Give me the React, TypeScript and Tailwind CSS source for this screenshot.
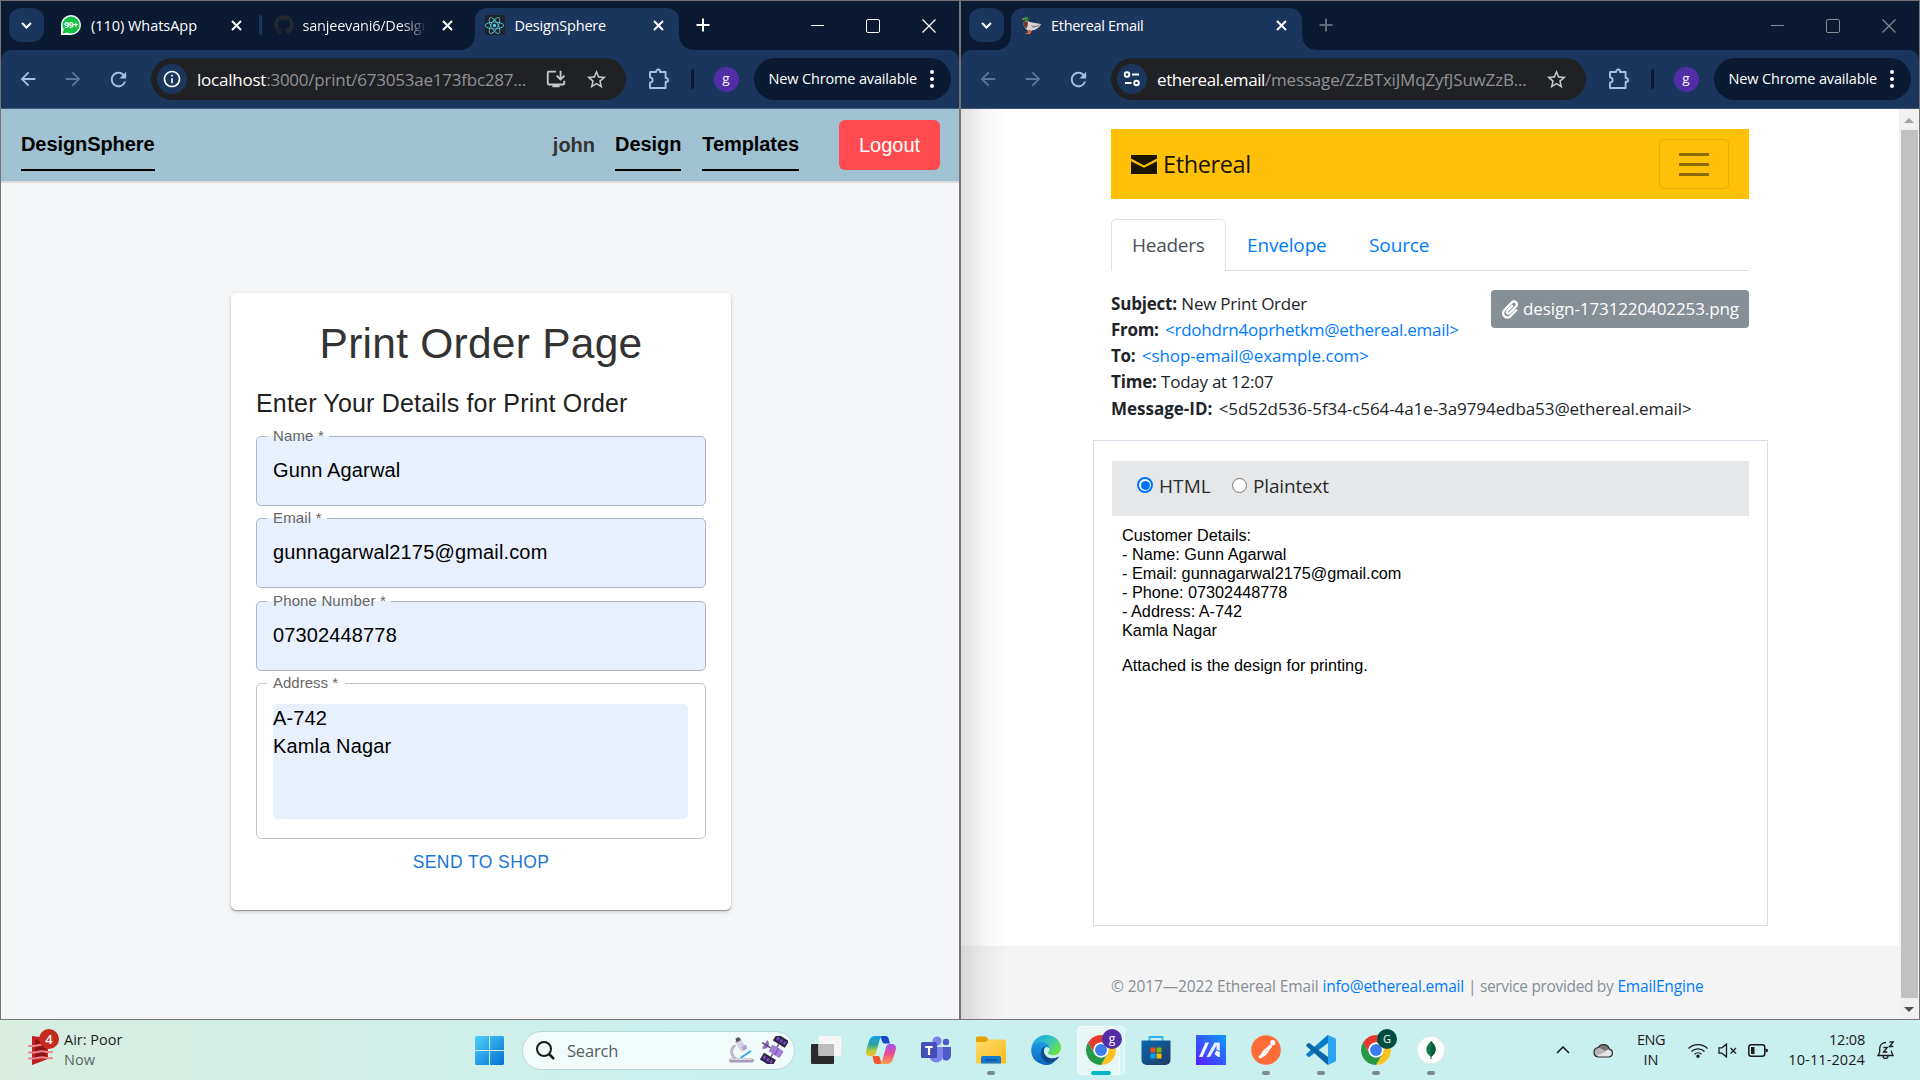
import React from "react";
import { FaGithub, FaReact, FaPaperclip } from "react-icons/fa";
import {
  MdArrowBack,
  MdArrowForward,
  MdRefresh,
  MdStarBorder,
  MdInstallDesktop,
  MdInfoOutline,
} from "react-icons/md";

type Kids = { children?: React.ReactNode };

/* ---------- small drawings ---------- */

const Cross = () => (
  <svg className="size-[11px] shrink-0" viewBox="0 0 11 11">
    <path d="M1 1l9 9M10 1l-9 9" stroke="#fff" strokeWidth="2" />
  </svg>
);

const Puzzle = () => (
  <svg className="size-[22px] shrink-0" viewBox="0 0 22 22" fill="none">
    <path
      d="M2 4h6.200V3.400a1.900 1.900 0 0 1 3.800 0V4h5.600v6h.6a1.900 1.900 0 0 1 0 3.800h-.6V20H2v-5.200c3.600-.6 3.600-5 0-5.600z"
      stroke="#a8c0e4"
      strokeWidth="1.900"
      strokeLinejoin="round"
    />
  </svg>
);

const Tune = () => (
  <svg className="size-[18px]" viewBox="0 0 18 18" fill="none" stroke="#fff" strokeWidth="1.900">
    <circle cx="4" cy="4.500" r="2.300" />
    <path d="M9 4.500h7M2 13h6.500" />
    <circle cx="13.500" cy="13" r="2.300" />
  </svg>
);

const WhatsApp = () => (
  <svg className="size-5 shrink-0" viewBox="0 0 20 20">
    <path d="M0 20V9.800A10 10 0 1 1 10 20z" fill="#fff" />
    <circle cx="10" cy="10" r="8.600" fill="#12c143" />
    <path d="M1.500 18.500l1.300-4.500 3.400 3.400z" fill="#12c143" />
    <text x="10.200" y="13.200" textAnchor="middle" fontSize="8.500" fontWeight="700" fill="#fff" fontFamily="Open Sans, sans-serif" textLength="14">
      99+
    </text>
  </svg>
);

const Duck = () => (
  <svg className="size-5 shrink-0" viewBox="0 0 20 20">
    <path d="M7 15l1 3M10 15l-1 3" stroke="#e0662f" strokeWidth="1.800" />
    <path d="M4.500 18.500h5" stroke="#e0662f" strokeWidth="1.200" />
    <path d="M2.500 7c3-1.500 5-1 6.500 0 3 1 7 1 11 2-1.500 3.500-5 6.500-10 6.500S2 12 2.500 7z" fill="#d9d3d6" />
    <path d="M2.500 6.500h4.200c.5 3-.2 6-1.700 7C2.600 12 2 9 2.500 6.500z" fill="#6b3a2c" />
    <path d="M10 10c3 1.500 6 1 9-1-1.500 3-4.500 4-7.500 3.300z" fill="#8a7f86" />
    <path d="M3.300 3a2.200 2.200 0 0 1 4.200.5c0 1.200-.6 2-1 2.800H3.800z" fill="#2b8c3c" />
    <path d="M3.500 3L0 4.200l3.500.6z" fill="#d9b23c" />
  </svg>
);

const Envelope = () => (
  <svg className="h-[19px] w-[26px]" viewBox="0 0 26 19" fill="#1a1400">
    <path d="M0 0h26v3.600L13 10.400 0 3.600z" />
    <path d="M0 6.200l13 6.600 13-6.600V19H0z" />
  </svg>
);

const Chrome = () => (
  <svg className="size-[30px]" viewBox="0 0 48 48">
    <path d="M24 12h20.780A24 24 0 0 0 3.220 12l10.380 18A12 12 0 0 1 24 12z" fill="#e33b2e" />
    <path d="M24 12h20.780A24 24 0 0 1 24 48l10.390-18A12 12 0 0 0 24 12z" fill="#fcc31e" />
    <path d="M34.390 30L24 48A24 24 0 0 1 3.220 12l10.390 18a12 12 0 0 0 20.780 0z" fill="#279847" />
    <circle cx="24" cy="24" r="12" fill="#fff" />
    <circle cx="24" cy="24" r="9.500" fill="#3b7ded" />
  </svg>
);

const Edge = () => (
  <svg className="size-[30px]" viewBox="0 0 30 30">
    <defs>
      <linearGradient id="eTop" x1="0" y1="0" x2="1" y2=".6">
        <stop offset="0" stopColor="#1c9be0" />
        <stop offset=".5" stopColor="#2fc0cf" />
        <stop offset="1" stopColor="#6be04f" />
      </linearGradient>
      <linearGradient id="eMid" x1="0" y1="0" x2="0" y2="1">
        <stop offset="0" stopColor="#1b9ae0" />
        <stop offset="1" stopColor="#0b66c2" />
      </linearGradient>
    </defs>
    <path d="M.3 13A15 15 0 0 1 15 0c8.500 0 15 6 15 12.500 0 5-3.500 7.800-7.800 7.800-3.500 0-5.200-1.200-5.200-2.300 0-1 1.700-1.500 1.500-4C18 8 7 4.500.3 13z" fill="url(#eTop)" />
    <path d="M.2 14C2 9 6 7 10 7c4.500 0 8.500 3 8.500 6.500-2-2.700-7-1-7 4.500 0 7 7 11 12.500 9A15 15 0 0 1 .2 14z" fill="url(#eMid)" />
    <path d="M14.500 11.500c-6 1-6.500 11-.5 15 4 2.600 9 2.200 13.500-3.700.5-.7 0-1.200-.7-.8-5 2.600-11.800 1.200-13.600-4-.8-2.600 0-5 1.300-6.500z" fill="#124a92" />
  </svg>
);

const Copilot = () => (
  <svg className="h-[28px] w-[30px]" viewBox="0 0 30 28">
    <defs>
      <linearGradient id="cL" x1="0" y1="0" x2="0" y2="1">
        <stop offset="0" stopColor="#1b9de8" />
        <stop offset=".45" stopColor="#2aa79b" />
        <stop offset=".75" stopColor="#b9cf3a" />
        <stop offset="1" stopColor="#f7b731" />
      </linearGradient>
      <linearGradient id="cR" x1="0" y1="0" x2="0" y2="1">
        <stop offset="0" stopColor="#a34df0" />
        <stop offset=".5" stopColor="#ec4f8d" />
        <stop offset="1" stopColor="#fca24a" />
      </linearGradient>
    </defs>
    <path d="M13 0h6.500c1.800 0 2.700 1.200 3.200 3l1.300 4.500h-5c-2.500 0-3-2-3.500-4S14.500 0 13 0z" fill="#1547c9" />
    <path d="M17 28h-6.500c-1.800 0-2.500-1.200-3-3L6.500 20h5c2.500 0 2.500 2 3 4s1 4 2.500 4z" fill="#f0562c" />
    <path d="M9 0h7.500c-2 1-2.600 3-3.300 5.500l-3 10.500c-.7 2.500-1.700 4-4.200 4H4c-3.500 0-4.500-3-3.700-6L3.200 4.500C4 1.800 6 0 9 0z" fill="url(#cL)" />
    <path d="M21 28h-7.500c2-1 2.600-3 3.300-5.500l3-10.500c.7-2.500 1.700-4 4.200-4h2c3.500 0 4.500 3 3.700 6l-2.900 9.500C26 26.200 24 28 21 28z" fill="url(#cR)" />
  </svg>
);

const Teams = () => (
  <svg className="h-[28px] w-[30px]" viewBox="0 0 30 28">
    <circle cx="25" cy="6" r="3.200" fill="#5059c9" />
    <path d="M20 11h10v8.500a5 5 0 0 1-8 4z" fill="#5059c9" />
    <circle cx="16" cy="5" r="4.600" fill="#7b83eb" />
    <path d="M8.500 11H22v9.500a6.800 6.800 0 0 1-13.500 0z" fill="#7b83eb" />
    <rect y="6" width="16" height="16" rx="1.500" fill="#464eb8" />
    <path d="M4.300 10h7.400v2H9.100v7H6.900v-7H4.300z" fill="#fff" />
  </svg>
);

const Folder = () => (
  <svg className="h-[28px] w-[30px]" viewBox="0 0 30 28">
    <defs>
      <linearGradient id="fo" x1="0" y1="0" x2="1" y2="1">
        <stop offset="0" stopColor="#ffdc6b" />
        <stop offset="1" stopColor="#fbb91a" />
      </linearGradient>
    </defs>
    <path d="M0 2A1.500 1.500 0 0 1 1.500.5H10l3 3.500H29V10H0z" fill="#e3a008" />
    <path d="M0 6h9l4-2.500h15.500A1.500 1.500 0 0 1 30 5v22.500H0z" fill="url(#fo)" />
    <path d="M5 27.500V22a2 2 0 0 1 2-2h16a2 2 0 0 1 2 2v5.500z" fill="#1179cf" />
    <path d="M9 24h12" stroke="#0b4f93" strokeWidth="1.500" />
  </svg>
);

const Store = () => (
  <svg className="size-[30px]" viewBox="0 0 30 30">
    <defs>
      <linearGradient id="st" x1="0" y1="0" x2="1" y2="1">
        <stop offset="0" stopColor="#0669ad" />
        <stop offset="1" stopColor="#243a63" />
      </linearGradient>
    </defs>
    <path d="M8.500 7V2h13v5" fill="none" stroke="#2fb3ee" strokeWidth="1.800" />
    <path d="M.5 5.500h29V25a5 5 0 0 1-5 5h-19a5 5 0 0 1-5-5z" fill="url(#st)" />
    <path d="M9.500 12.500h5v5h-5z" fill="#f25022" />
    <path d="M15.500 12.500h5v5h-5z" fill="#7fba00" />
    <path d="M9.500 18.500h5v5h-5z" fill="#00a4ef" />
    <path d="M15.500 18.500h5v5h-5z" fill="#ffb900" />
  </svg>
);

const Asus = () => (
  <svg className="size-[30px]" viewBox="0 0 30 30">
    <defs>
      <linearGradient id="as" x1="0" y1="1" x2="1" y2="0">
        <stop offset="0" stopColor="#5a1bff" />
        <stop offset="1" stopColor="#0a9bff" />
      </linearGradient>
    </defs>
    <path d="M0 0h30v30H0z" fill="url(#as)" />
    <path d="M9.500 7.500H13L6.500 22H3z" fill="#f4f4ff" />
    <path d="M18.500 7.500h5.300V16l-3.300-1.500v-4L14 22h-3.500z" fill="#e9ebff" />
    <path d="M20.500 15.500l3.300 1.500v5h-1.500l-3.800-3z" fill="#fff" />
  </svg>
);

const Postman = () => (
  <svg className="size-[30px]" viewBox="0 0 30 30">
    <circle cx="15" cy="15" r="14.800" fill="#ff6c37" />
    <circle cx="21.700" cy="7.700" r="2.600" fill="#fff" />
    <path d="M19.500 10.500L12 17M20 11.500l-5.500 7.500-5 3.500M14 16l-5.500 6M12 17l3.500.5" stroke="#fff" strokeWidth="1.900" fill="none" strokeLinecap="round" />
  </svg>
);

const VSCode = () => (
  <svg className="size-[30px]" viewBox="0 0 30 30">
    <path d="M22 0l-1.500 1L2 17.500l-1.500 1.300c-.5.500-.5 1 0 1.500l1.600 1.400c.4.400 1 .4 1.500 0L22 8z" fill="#0a7bc9" />
    <path d="M22 30l-1.500-1L2 12.500.5 11.200c-.5-.5-.5-1 0-1.500l1.600-1.400c.4-.4 1-.4 1.500 0L22 22z" fill="#0b65a9" />
    <path d="M22 0l7 3.300c.6.300 1 .8 1 1.500v20.400c0 .7-.4 1.200-1 1.500L22 30c-.8 0-1.200-.3-1.600-.8.900.9 1.600.3 1.600-.7v-27c0-1-.8-1.600-1.600-.7C20.800.3 21.300 0 22 0z" fill="#2aa5f2" />
  </svg>
);

const Mongo = () => (
  <svg className="size-[30px]" viewBox="0 0 30 30">
    <circle cx="15" cy="15" r="13.800" fill="#fbfcfb" stroke="#dfe8e6" />
    <path d="M15 6c3 3 5 5.500 4.600 9.300-.4 2.900-2.200 4.700-4 6.200h-1.200c-1.800-1.500-3.700-3.300-4-6.200C10 11.500 12.500 9 15 6z" fill="#0f7a4a" />
    <path d="M15 6c3 3 5 5.500 4.600 9.300-.4 2.900-2.200 4.700-4 6.200H15z" fill="#0a5b3c" />
    <path d="M15 20v4" stroke="#0a5b3c" />
  </svg>
);

const TaskView = () => (
  <svg className="h-[28px] w-[30px]" viewBox="0 0 30 28">
    <rect y="8" width="23" height="20" rx="1" fill="#2b2b2b" />
    <rect x="7.500" width="22.500" height="20" rx="1" fill="#f6f6f6" />
    <path d="M7.500 8H23v12H8.500a1 1 0 0 1-1-1z" fill="#bdbdbd" />
  </svg>
);

const Windows = () => (
  <svg className="size-[29px]" viewBox="0 0 29 29">
    <defs>
      <linearGradient id="wi" gradientUnits="userSpaceOnUse" x1="0" y1="0" x2="29" y2="29">
        <stop offset="0" stopColor="#4fd0fc" />
        <stop offset="1" stopColor="#0070d2" />
      </linearGradient>
    </defs>
    <path fill="url(#wi)" d="M1.500 0H14v14H0V1.500A1.500 1.500 0 0 1 1.500 0zM15 0h12.500A1.500 1.500 0 0 1 29 1.500V14H15zM0 15h14v14H1.500A1.500 1.500 0 0 1 0 27.500zM15 15h14v12.500a1.500 1.500 0 0 1-1.500 1.500H15z" />
  </svg>
);

const Microscope = () => (
  <svg className="h-[26px] w-[25px]" viewBox="0 0 25 26">
    <path d="M7.500 22C1.500 19 1 11 6.500 8.500" fill="none" stroke="#c2b8ce" strokeWidth="3" />
    <path d="M5.500 4.500l6-3 6.500 10-5.500 3.500z" fill="#d6cfe0" />
    <path d="M6.500 1.500l3.500-1.500 2 3-4.500 2.500z" fill="#57505f" />
    <path d="M12.500 10l4.500-2.500 1.500 4-4 2.500z" fill="#b3a3d4" />
    <path d="M11.500 21l10.500-7" stroke="#35a4ea" strokeWidth="2" />
    <rect y="21.500" width="25" height="4" rx="2" fill="#a79bb8" />
    <rect x="1" y="21.500" width="22" height="1.500" rx=".7" fill="#dcd5e5" />
  </svg>
);

const Satellite = () => (
  <svg className="size-[28px]" viewBox="0 0 28 28">
    <g transform="rotate(32 14 14)">
      <rect x="8" y="-1.500" width="14" height="8" rx=".5" fill="#2c2440" />
      <path d="M10 2.500h2.800M14 2.500h2.800M18 2.500h2.500" stroke="#6f45c0" strokeWidth="3.500" />
      <rect x="7" y="21.500" width="14" height="8" rx=".5" fill="#2c2440" />
      <path d="M8.500 25.500h2.800M12.500 25.500h2.800M16.500 25.500H19" stroke="#6f45c0" strokeWidth="3.500" />
      <path d="M15 6.500v15" stroke="#6b5a86" strokeWidth="1.500" />
      <rect x="10" y="10" width="13" height="8" rx="1" fill="#a57fd6" />
      <path d="M17 10v8" stroke="#7f5cb8" strokeWidth="1.500" />
      <path d="M3 9c5 1 6 9 0 10z" fill="#8d6cc0" />
      <path d="M0 14h10" stroke="#5e4a7c" strokeWidth="1.600" />
    </g>
  </svg>
);

const AirQuality = () => (
  <svg className="h-[30px] w-[26px]" viewBox="0 0 26 30">
    <path d="M4 1l16 2v21L4 30z" fill="#c0201f" />
    <path d="M7 5l11 1v15L7 25z" fill="#8f1216" />
    <g fill="none" stroke="#f0808a" strokeWidth="2" strokeLinecap="round">
      <path d="M1 11h5c4 0 6-2 10-1 3 .7 5 1 8 .5" />
      <path d="M1 17.500h5c4 0 6-2 10-1 3 .7 5 1 8 .5" />
      <path d="M1 23.500h5c4 0 6-2 10-1 3 .7 5 1 8 .5" />
    </g>
  </svg>
);

/* ---------- browser chrome ---------- */

function Tab({ className, active, children }: Kids & { className: string; active?: boolean }) {
  return (
    <div
      className={
        "relative mt-auto flex h-[42px] items-center pb-[8px] text-[14.5px] text-white " +
        (active ? "rounded-t-[12px] bg-[#1b365d] " : "") +
        className
      }
    >
      {active && (
        <>
          <span className="absolute bottom-0 -left-[14px] size-[14px] bg-[radial-gradient(circle_at_0_0,transparent_13.5px,#1b365d_14px)]" />
          <span className="absolute -right-[14px] bottom-0 size-[14px] bg-[radial-gradient(circle_at_100%_0,transparent_13.5px,#1b365d_14px)]" />
        </>
      )}
      {children}
    </div>
  );
}

function TabStrip({ dim, children }: Kids & { dim?: boolean }) {
  return (
    <div className="flex h-[49px] shrink-0 items-start bg-[#0a1a32]">
      <div className="mt-[7px] mr-[7px] ml-2 flex h-[34px] w-[35px] shrink-0 items-center justify-center rounded-[12px] bg-[#1b365d]">
        <svg className="h-[7px] w-[11px]" viewBox="0 0 11 7">
          <path d="M1 1l4.500 4.500L10 1" fill="none" stroke="#fff" strokeWidth="2" />
        </svg>
      </div>
      {children}
      <svg className={"mt-[17px] ml-[17px] size-[14px] " + (dim ? "opacity-35" : "")} viewBox="0 0 14 14">
        <path d="M7 .5v13M.5 7h13" stroke="#fff" strokeWidth="2" />
      </svg>
      <div className={"mr-[2px] ml-auto flex h-[49px] items-center " + (dim ? "opacity-50" : "")}>
        <div className="flex w-14 justify-center">
          <div className="h-px w-[13px] bg-white" />
        </div>
        <div className="flex w-14 justify-center">
          <div className="size-[14px] rounded-[2px] border border-white" />
        </div>
        <div className="flex w-14 justify-center">
          <svg className="size-[14px]" viewBox="0 0 14 14">
            <path d="M.5.5l13 13M13.500.5l-13 13" stroke="#fff" strokeWidth="1.200" />
          </svg>
        </div>
      </div>
    </div>
  );
}

function Toolbar({ canGoBack, site, install, children }: Kids & { canGoBack?: boolean; site: React.ReactNode; install?: boolean }) {
  return (
    <div className="bg-[#0a1a32]">
      <div className="flex h-[59px] items-center rounded-t-[10px] border-b border-[#3f5779] bg-[#1b365d] pl-[16px] text-[#a8c0e4]">
        <MdArrowBack className={"size-[22px] " + (canGoBack ? "" : "opacity-45")} />
        <MdArrowForward className="ml-[23px] size-[22px] opacity-45" />
        <MdRefresh className="ml-[23px] size-[23px]" />
        <div className="ml-[21px] flex h-[42px] w-[475px] items-center rounded-full bg-[#202124] pl-[6px] text-[17px] text-[#8f9296]">
          <div className="mr-[10px] flex size-[30px] shrink-0 items-center justify-center rounded-full bg-[#1b365d] text-white">{site}</div>
          <div className="pt-px whitespace-nowrap">{children}</div>
          <div className="mr-[18px] ml-auto flex gap-[18px] text-[#c6c9cc]">
            {install && <MdInstallDesktop className="size-[22px]" />}
            <MdStarBorder className="size-[23px]" />
          </div>
        </div>
        <div className="ml-[22px]">
          <Puzzle />
        </div>
        <div className="ml-[21px] h-5 w-[2.500px] rounded bg-[#0a1a32]" />
        <div className="ml-[20px] flex size-[25px] items-center justify-center rounded-full bg-[#522da8] pb-[2px] text-[13.5px] text-white">g</div>
        <div className="ml-[15px] flex h-[42px] w-[197px] items-center rounded-full bg-[#0a1a32] pl-[15px] text-white">
          <span className="pb-px text-[14.5px] tracking-[-0.15px] whitespace-nowrap">New Chrome available</span>
          <span className="ml-[13px] flex flex-col gap-[3px]">
            <i className="size-1 rounded-full bg-white" />
            <i className="size-1 rounded-full bg-white" />
            <i className="size-1 rounded-full bg-white" />
          </span>
        </div>
      </div>
    </div>
  );
}

/* ---------- left window ---------- */

function Field({ label, gap, className, filled, children }: Kids & { label: string; gap: string; className: string; filled?: boolean }) {
  return (
    <div className={"relative rounded-[5px] border text-[20px] text-black " + (filled ? "border-[#aeb4c1] bg-[#e8f0fe] " : "border-[#c4c4c4] bg-white ") + className}>
      <span className={"absolute -top-px left-[10px] h-px " + (filled ? "bg-[#e8f0fe] " : "bg-white ") + gap} />
      <span className="absolute -top-[11px] left-[16px] text-[15px] leading-5 whitespace-nowrap text-[#666]">{label}</span>
      {children}
    </div>
  );
}

function NavLink({ children }: Kids) {
  return <a className="border-b-2 border-black pb-[10px] text-[20px] leading-[30px] font-bold tracking-[-0.08px] text-black">{children}</a>;
}

function PrintWindow() {
  return (
    <section className="flex h-[1020px] w-[960px] flex-col border border-[#757575]">
      <TabStrip>
        <Tab className="w-[208px] pr-[17px] pl-[10px]">
          <WhatsApp />
          <span className="ml-[10px] flex-1 pt-px tracking-[-0.04px]">(110) WhatsApp</span>
          <Cross />
        </Tab>
        <div className="mt-[14px] h-5 w-[2.500px] rounded bg-[#1b365d]" />
        <Tab className="w-[213px] pr-[22px] pl-[12px]">
          <FaGithub className="size-5 shrink-0 text-[#24292f]" />
          <span className="mr-[15px] ml-[9px] w-0 flex-1 overflow-hidden bg-linear-to-r from-white from-80% to-transparent bg-clip-text pt-px tracking-[-0.2px] whitespace-nowrap text-transparent">
            sanjeevani6/DesignSphere
          </span>
          <Cross />
        </Tab>
        <Tab active className="w-[204px] pr-[15px] pl-[10px]">
          <span className="flex size-5 shrink-0 items-center justify-center rounded-[2px] bg-[#20232a]">
            <FaReact className="size-[19px] text-[#5bc4dc]" />
          </span>
          <span className="ml-[10px] flex-1 pt-px tracking-[-0.2px]">DesignSphere</span>
          <Cross />
        </Tab>
      </TabStrip>
      <Toolbar canGoBack install site={<MdInfoOutline className="size-[20px]" />}>
        <span className="tracking-[-0.23px]">
          <span className="text-white">localhost</span>:3000/print/673053ae173fbc287...
        </span>
      </Toolbar>

      <div className="flex flex-1 flex-col bg-[#f4f5f7] font-['Liberation_Sans',Arial,sans-serif]">
        <header className="flex h-[72px] items-start bg-[#a1c2d3] pr-[19px] pl-5 shadow-[0_2px_0_#dadcdf]">
          <div className="flex pt-5">
            <NavLink>DesignSphere</NavLink>
          </div>
          <nav className="ml-auto flex gap-5 pt-5">
            <span className="text-[20px] leading-[32px] font-bold text-[#333]">john</span>
            <NavLink>Design</NavLink>
            <span className="flex pl-px">
              <NavLink>Templates</NavLink>
            </span>
          </nav>
          <button className="mt-[11px] ml-10 h-[50px] w-[101px] rounded-[6px] bg-[#ff4b4f] pb-px text-[20px] text-white">Logout</button>
        </header>

        <main className="mt-[112px] ml-[230px] flex h-[617px] w-[500px] flex-col rounded-[5px] bg-white px-[25px] pt-[25px] shadow-[0_1px_1px_rgba(0,0,0,0.35),0_2px_4px_rgba(0,0,0,0.14)]">
          <h4 className="text-center text-[42.5px] leading-[52.5px] tracking-[0.25px] text-[#333]">Print Order Page</h4>
          <h6 className="mt-[12px] text-[25px] leading-10 tracking-[0.18px] whitespace-nowrap text-[#212121]">Enter Your Details for Print Order</h6>
          <form className="mt-[13px] flex flex-col gap-[12.500px]">
            <Field label="Name *" gap="w-[62px]" filled className="h-[70px] pl-4 leading-[66px] tracking-[0.14px]">
              Gunn Agarwal
            </Field>
            <Field label="Email *" gap="w-[60px]" filled className="h-[70px] pl-4 leading-[67px] tracking-[0.16px]">
              gunnagarwal2175@gmail.com
            </Field>
            <Field label="Phone Number *" gap="w-[124px]" filled className="h-[70px] pl-4 leading-[66px] tracking-[0.14px]">
              07302448778
            </Field>
            <Field label="Address *" gap="w-[78px]" className="h-[156px] px-4 pt-5">
              <div className="h-[115px] w-[415px] rounded-[5px] bg-[#e8f0fe] leading-[28px] tracking-[0.14px]">
                A-742
                <br />
                Kamla Nagar
              </div>
            </Field>
          </form>
          <button className="mt-[12px] text-[17.500px] leading-[22px] tracking-[0.42px] text-[#1976d2]">SEND TO SHOP</button>
        </main>
      </div>
    </section>
  );
}

/* ---------- right window ---------- */

function MailWindow() {
  return (
    <section className="relative flex h-[1020px] w-[960px] flex-col border border-[#757575]">
      <TabStrip dim>
        <Tab active className="w-[291px] pr-[15px] pl-[10px]">
          <Duck />
          <span className="ml-[10px] flex-1 pt-px tracking-[-0.3px]">Ethereal Email</span>
          <Cross />
        </Tab>
      </TabStrip>
      <Toolbar site={<Tune />}>
        <span className="tracking-[-0.18px]">
          <span className="tracking-[-0.4px] text-white">ethereal.email</span>/message/ZzBTxiJMqZyfJSuwZzB...
        </span>
      </Toolbar>

      <div className="flex flex-1 bg-white">
        <div className="flex w-[938px] flex-col">
          <div className="ml-[150px] w-[638px] pt-5">
            <div className="flex h-[70px] items-center bg-[#ffc107] px-5">
              <Envelope />
              <span className="ml-[6px] pt-[2px] text-[23.500px] tracking-[-0.38px] text-[#1a1400]">Ethereal</span>
              <div className="ml-auto flex h-[50px] w-[70px] flex-col items-center justify-center gap-[7px] rounded-[5px] border border-black/10">
                <i className="h-[3px] w-[30px] bg-black/45" />
                <i className="h-[3px] w-[30px] bg-black/45" />
                <i className="h-[3px] w-[30px] bg-black/45" />
              </div>
            </div>
            <div className="mt-5 flex h-[52px] border-b border-[#dee2e6] text-[19px] leading-[30px] text-[#007bff]">
              <div className="-mb-px w-[115px] rounded-t-[5px] border border-b-0 border-[#dee2e6] bg-white pt-[10px] pl-[20px] tracking-[-0.25px] text-[#495057]">Headers</div>
              <div className="w-[123px] pt-[11px] pl-[21px] tracking-[-0.16px]">Envelope</div>
              <div className="pt-[11px] pl-[20px] tracking-[-0.1px]">Source</div>
            </div>
            <div className="mt-[19px] flex h-[150px] items-start justify-between">
              <div className="pt-px text-[17px] leading-[26px] whitespace-nowrap text-[#212529]">
                <div className="h-[26px]">
                  <b className="tracking-[-0.2px]">Subject:</b> <span className="tracking-[-0.25px]">New Print Order</span>
                </div>
                <div className="h-[26px]">
                  <b className="mr-[2px] tracking-[-0.3px]">From:</b> <span className="tracking-[-0.25px] text-[#007bff]">&lt;rdohdrn4oprhetkm@ethereal.email&gt;</span>
                </div>
                <div className="h-[26px]">
                  <b className="mr-[2px] tracking-[-0.3px]">To:</b> <span className="tracking-[-0.08px] text-[#007bff]">&lt;shop-email@example.com&gt;</span>
                </div>
                <div className="h-[27px]">
                  <b className="tracking-[-0.2px]">Time:</b> <span className="tracking-[-0.25px]">Today at 12:07</span>
                </div>
                <div className="h-[26px]">
                  <b className="mr-[2px] tracking-[-0.01px]">Message-ID:</b> <span className="tracking-[-0.08px]">&lt;5d52d536-5f34-c564-4a1e-3a9794edba53@ethereal.email&gt;</span>
                </div>
              </div>
              <div className="-ml-[300px] flex h-[38px] w-[258px] items-center rounded-[4px] bg-[#868e96] pl-[11px] text-[17px] text-white">
                <FaPaperclip className="h-[19px] w-[16px]" />
                <span className="ml-[5px] tracking-[-0.1px]">design-1731220402253.png</span>
              </div>
            </div>
          </div>

          <div className="ml-[132px] h-[486px] w-[675px] border border-[#dcdce8] px-[18px] pt-5">
            <div className="flex h-[55px] items-center bg-[#e6e7e8] pb-[6px] pl-[25px] text-[19px] text-[#292b2c]">
              <span className="-mt-px flex size-[16px] items-center justify-center rounded-full border-2 border-[#0075ff] bg-white">
                <i className="size-[9px] rounded-full bg-[#0075ff]" />
              </span>
              <span className="ml-[6px] w-[73px] pt-px tracking-[0.1px]">HTML</span>
              <span className="-mt-px size-[15px] rounded-full border border-[#767676] bg-white" />
              <span className="ml-[6px] pt-px tracking-[-0.16px]">Plaintext</span>
            </div>
            <div className="pt-[10px] pl-[10px] font-['Liberation_Sans',Arial,sans-serif] text-[16.250px] leading-[19px] text-black">
              <p>
                Customer Details:
                <br />- Name: Gunn Agarwal
                <br />- Email: gunnagarwal2175@gmail.com
                <br />- Phone: 07302448778
                <br />- Address: A-742
                <br />
                Kamla Nagar
              </p>
              <p className="mt-4">Attached is the design for printing.</p>
            </div>
          </div>

          <footer className="mt-auto flex h-[73px] items-center bg-[#f4f4f4] pt-[9px] pl-[150px] text-[15.500px] whitespace-pre text-[#868e96]">
            <span className="tracking-[-0.12px]">© 2017—2022 Ethereal Email</span>
            <a className="ml-1 tracking-[-0.21px] text-[#007bff]">info@ethereal.email</a>
            <span className="ml-[4px] tracking-[-0.34px]">| service provided by</span>
            <a className="ml-1 tracking-[-0.18px] text-[#007bff]">EmailEngine</a>
          </footer>
        </div>

        <div className="flex w-5 flex-col items-center bg-[#f1f1f1]">
          <svg className="h-[21px] w-[10px]" viewBox="0 0 10 21">
            <path d="M5 9l5 5H0z" fill="#a3a3a3" />
          </svg>
          <div className="w-[17px] flex-1 bg-[#c1c1c1]" />
          <svg className="h-[21px] w-[10px]" viewBox="0 0 10 21">
            <path d="M5 14l5-5H0z" fill="#505050" />
          </svg>
        </div>
      </div>
      <div className="absolute top-[108px] bottom-0 left-0 w-[46px] bg-linear-to-r from-black/12 via-black/4 to-transparent" />
    </section>
  );
}

/* ---------- taskbar ---------- */

function TaskbarItem({ children, running, badge }: Kids & { running?: boolean; badge?: React.ReactNode }) {
  return (
    <div className="relative flex h-[60px] w-[55px] shrink-0 items-center justify-center">
      {children}
      {badge}
      {running && <i className="absolute bottom-[5px] h-[4px] w-[8px] rounded-full bg-[#7a8b8b]" />}
    </div>
  );
}

function Taskbar() {
  return (
    <footer className="flex h-[60px] items-center bg-linear-to-r from-[#d8eee1] via-[#c9f0ef] via-40% to-[#c9f0ef] text-[14.5px] leading-5 text-[#1b1b1b]">
      <div className="flex w-[462px] items-center pl-[28px]">
        <div className="relative">
          <AirQuality />
          <span className="absolute -top-[6px] left-[11px] flex size-5 items-center justify-center rounded-full bg-[#c42b1c] text-[13px] font-semibold text-white">4</span>
        </div>
        <div className="ml-[10px]">
          <div>Air: Poor</div>
          <div className="text-[#5c6665]">Now</div>
        </div>
      </div>
      <TaskbarItem>
        <Windows />
      </TaskbarItem>
      <div className="mr-[3px] ml-[5px] flex h-[39px] w-[273px] items-center rounded-full border border-[#b5d8d7] bg-[#f1fbfa] pl-[13px]">
        <svg className="size-[19px]" viewBox="0 0 19 19">
          <circle cx="8" cy="8" r="7" fill="none" stroke="#1b1b1b" strokeWidth="2" />
          <path d="M13 13l5 5" stroke="#1b1b1b" strokeWidth="2.500" />
        </svg>
        <span className="ml-3 pt-px text-[16.500px] tracking-[-0.2px] text-[#555e5e]">Search</span>
        <span className="mr-[6px] ml-auto flex items-center gap-[6px]">
          <Microscope />
          <Satellite />
        </span>
      </div>
      <TaskbarItem>
        <TaskView />
      </TaskbarItem>
      <TaskbarItem>
        <Copilot />
      </TaskbarItem>
      <TaskbarItem>
        <Teams />
      </TaskbarItem>
      <TaskbarItem running>
        <Folder />
      </TaskbarItem>
      <TaskbarItem>
        <Edge />
      </TaskbarItem>
      <div className="relative flex h-[60px] w-[55px] shrink-0 items-center justify-center">
        <i className="absolute top-[6px] left-[8px] h-[49px] w-[44px] rounded-r-[5px] border border-white/60 bg-white/30" />
        <i className="absolute top-[6px] left-[4px] h-[49px] w-[43px] rounded-[5px] border border-white/70 bg-[#e6f7f6]" />
        <span className="relative">
          <Chrome />
        </span>
        <span className="absolute top-[9px] left-[29px] flex size-5 items-center justify-center rounded-full bg-[#522da8] pb-px text-[12px] text-white">g</span>
        <i className="absolute bottom-[5px] h-[4px] w-[20px] rounded-full bg-[#00b7c3]" />
      </div>
      <TaskbarItem>
        <Store />
      </TaskbarItem>
      <TaskbarItem>
        <Asus />
      </TaskbarItem>
      <TaskbarItem running>
        <Postman />
      </TaskbarItem>
      <TaskbarItem running>
        <VSCode />
      </TaskbarItem>
      <TaskbarItem
        running
        badge={<span className="absolute top-[9px] left-[29px] flex size-5 items-center justify-center rounded-full bg-[#004d40] text-[11px] text-white">G</span>}
      >
        <Chrome />
      </TaskbarItem>
      <TaskbarItem running>
        <Mongo />
      </TaskbarItem>

      <div className="ml-auto flex items-center">
        <svg className="h-2 w-[14px]" viewBox="0 0 14 8">
          <path d="M1 7l6-6 6 6" fill="none" stroke="#1b1b1b" strokeWidth="1.600" />
        </svg>
        <svg className="ml-[23px] h-[15px] w-5" viewBox="0 0 20 15">
          <path d="M5 14h10.500a4 4 0 0 0 .8-7.900A6 6 0 0 0 5.300 4.500 4.800 4.800 0 0 0 5 14z" fill="#e4e4e4" />
          <path d="M5.300 4.500a6 6 0 0 1 11 1.600L12 8z" fill="#777" />
          <path d="M1 9.500C1 6 3 4.600 5.300 4.500L13 8.500 3 13.200z" fill="#b5b5b5" />
          <path d="M5 14h10.500a4 4 0 0 0 .8-7.900A6 6 0 0 0 5.300 4.500 4.800 4.800 0 0 0 5 14z" fill="none" stroke="#2b2b2b" strokeWidth="1.200" />
        </svg>
        <div className="ml-6 w-[28px] text-center">
          <div className="tracking-[-0.5px]">ENG</div>
          <div>IN</div>
        </div>
        <svg className="ml-[23px] h-[15px] w-5" viewBox="0 0 20 15" fill="none" stroke="#1b1b1b" strokeWidth="1.400">
          <path d="M.5 5.500a13.500 13.500 0 0 1 19 0M3.500 8.500a9.300 9.300 0 0 1 13 0M6.500 11.300a5 5 0 0 1 7 0" />
          <circle cx="10" cy="13.300" r="1" fill="#1b1b1b" />
        </svg>
        <svg className="ml-[10px] h-[15px] w-[19px]" viewBox="0 0 19 15" fill="none" stroke="#1b1b1b" strokeWidth="1.300">
          <path d="M1 4.800h3L8.500 1v13L4 10.200H1zM12.500 5l5.500 5.500M18 5l-5.500 5.500" />
        </svg>
        <svg className="ml-[11px] h-[13px] w-5" viewBox="0 0 20 13">
          <rect x=".8" y=".8" width="16" height="11.400" rx="2.500" fill="none" stroke="#1b1b1b" strokeWidth="1.500" />
          <path d="M3 3h3.500v7H3z" fill="#1b1b1b" />
          <path d="M17.500 4.500l2.500 1v2l-2.500 1z" fill="#1b1b1b" />
        </svg>
        <div className="mr-px ml-[20px] w-[77px] text-right whitespace-nowrap">
          <div className="tracking-[-0.2px]">12:08</div>
          <div className="tracking-[0.1px]">10-11-2024</div>
        </div>
        <svg className="mr-[25px] ml-[11px] h-[18px] w-[18px]" viewBox="0 0 18 18" fill="none" stroke="#1b1b1b" strokeWidth="1.300">
          <path d="M9 1.500A6 6 0 0 0 2.700 7.500V11L1 14.500h15L14.500 11V9.500M6 15a2.500 2.500 0 0 0 5 0" />
          <path d="M6.500 6.500h3.800l-3.800 4.500h3.800M12.500 1h3.800l-3.800 4.500h3.800" />
        </svg>
      </div>
    </footer>
  );
}

export default function App() {
  return (
    <div className="h-[1080px] w-[1920px] overflow-hidden bg-white font-['Open_Sans','Noto_Sans',sans-serif]">
      <div className="flex">
        <PrintWindow />
        <MailWindow />
      </div>
      <Taskbar />
    </div>
  );
}
